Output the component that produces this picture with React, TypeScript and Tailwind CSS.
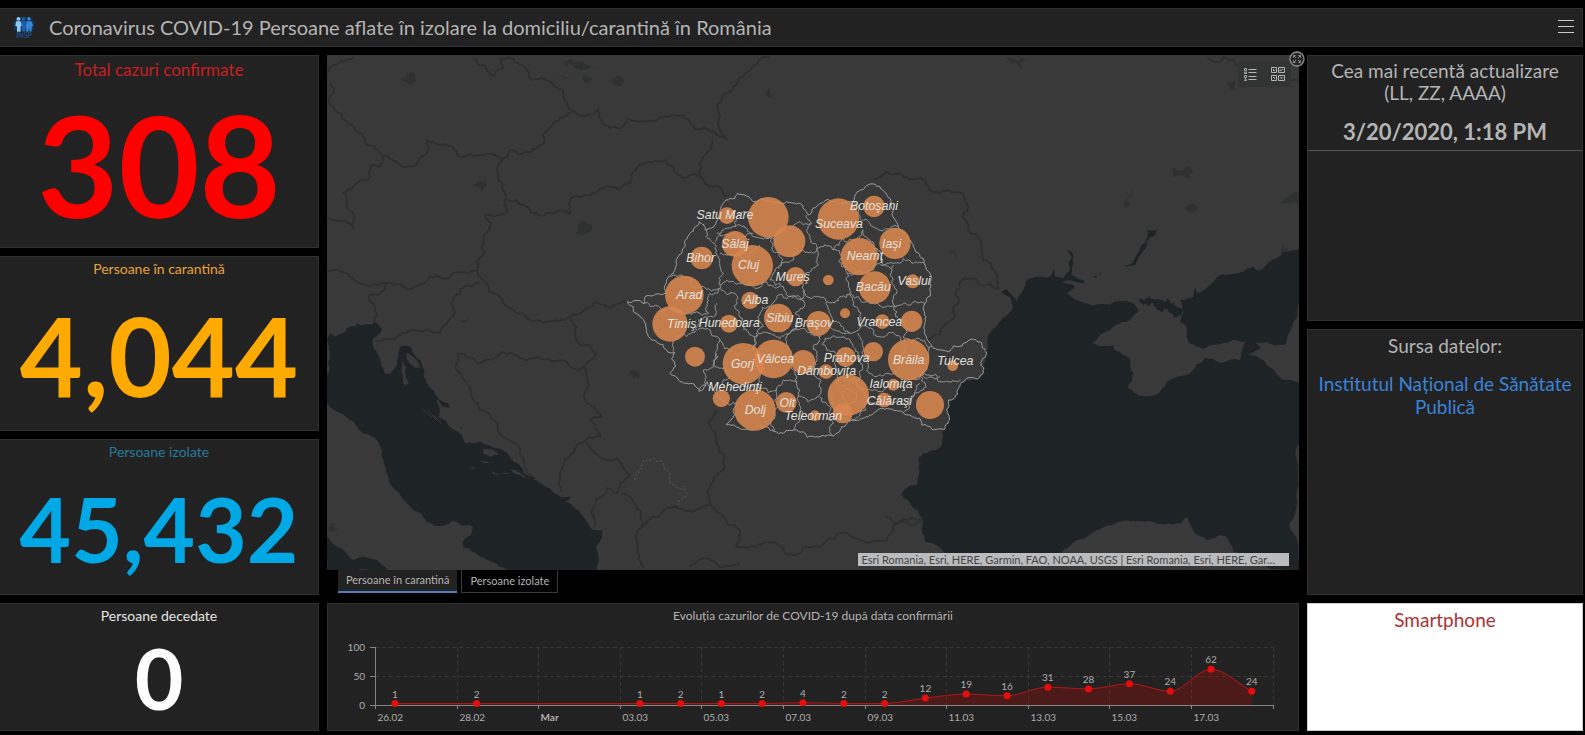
import { useState } from "react";

type Pt = [number, number];

/* ---------- geometry helpers ---------- */

const parse = (s: string): Pt[] =>
  s.trim().split(/\s+/).map((p) => p.split(",").map(Number) as Pt);

// Roughens a coarse polyline with seeded midpoint displacement.
function rough(s: string, amp: number, min: number, close = false): string {
  const pts = parse(s);
  let seed = pts[0][0] * 31 + pts[0][1] * 17 + pts.length;
  const rnd = () => {
    seed = (seed * 9301 + 49297) % 233280;
    return seed / 233280 - 0.5;
  };
  const out: Pt[] = [pts[0]];
  const split = (a: Pt, b: Pt) => {
    const dx = b[0] - a[0];
    const dy = b[1] - a[1];
    if (Math.hypot(dx, dy) < min) {
      out.push(b);
      return;
    }
    const k = rnd() * amp;
    const m: Pt = [(a[0] + b[0]) / 2 - dy * k, (a[1] + b[1]) / 2 + dx * k];
    split(a, m);
    split(m, b);
  };
  for (let i = 1; i < pts.length; i++) split(pts[i - 1], pts[i]);
  if (close) split(pts[pts.length - 1], pts[0]);
  return "M" + out.map((p) => p[0].toFixed(1) + " " + p[1].toFixed(1)).join("L") + (close ? "Z" : "");
}

/* ---------- base map ---------- */

const ADRIATIC =
  "21,118 30,100 45,110 80,85 110,80 108,68 130,75 160,72 165,65 185,90 180,100 160,115 165,150 180,180 192,220 210,222 225,205 235,160 245,137 275,145 300,180 312,210 320,250 345,285 360,325 355,350 395,385 425,405 435,430 480,425 530,445 570,470 600,495 612,520 640,530 690,565 720,590 760,620 790,650 820,690 848,690 845,715 832,735 835,770 832,812 570,812 500,780 430,742 428,725 455,700 458,680 450,675 345,677 320,665 270,620 225,570 200,520 185,460 165,415 130,400 60,340 21,310";
const TYRRHENIAN = "21,710 50,740 75,755 100,780 130,770 170,780 205,812 21,812";
const CHANNEL = "312,250 345,278 370,305 392,322 370,320 330,295";
const ISLANDS = [
  "262,158 290,180 300,205 275,195 265,185",
  "248,180 258,200 268,250 255,258 245,215",
  "490,450 515,448 537,462 510,470 490,462",
  "515,515 572,515 560,523 520,523",
  "570,508 600,518 650,541 610,532",
  "478,483 525,487 500,490",
  "448,503 465,499 462,507",
];

const BLACK_SEA =
  "262,900 275,840 305,810 340,772 335,755 305,725 320,718 340,740 350,755 370,720 380,690 420,680 450,680 462,655 465,680 490,685 510,662 506,640 515,622 503,598 520,615 520,640 515,675 550,690 555,700 480,695 520,705 525,715 500,730 530,750 570,765 630,765 660,752 700,760 715,785 690,810 640,830 600,855 578,880 600,890 640,885 645,900 670,915 690,925 700,970 683,1012 705,1030 730,1038 765,1035 800,995 870,970 915,925 940,928 960,938 1020,930 1030,890 1035,875 1000,870 940,885 910,897 890,890 868,880 862,835 840,815 850,790 845,760 840,750 880,740 885,712 895,730 920,715 960,675 1000,672 1060,650 1075,662 1130,625 1150,605 1200,597 1200,730 1192,780 1175,830 1160,870 1155,885 1125,888 1100,875 1065,880 1085,895 1045,915 1090,930 1120,960 1150,990 1200,998 1200,1564 1150,1560 1040,1512 1000,1505 980,1460 960,1455 920,1470 885,1450 870,1420 860,1400 845,1420 780,1422 670,1412 580,1445 500,1495 480,1508 300,1540 130,1505 75,1475 65,1440 70,1410 30,1360 5,1335 25,1310 50,1305 55,1225 70,1210 120,1195 130,1160 132,1080 150,1010 185,990 245,980 255,900";
const RESERVOIR =
  "675,650 698,638 715,605 738,578 742,540 770,538 766,555 750,560 740,588 715,622 705,645";
const SIVASH = "715,745 735,752 750,738 780,752 800,748 832,770 845,805 820,802 805,785 780,782 760,770";

const NORTH_WEST = [
  "21,72 40,45 60,35 100,22",
  "30,100 45,115 28,145 45,180 80,215 125,250 140,285 180,305 190,325 180,350 150,350 150,380 110,400 70,430 80,465 100,490 100,535 75,510 21,503",
  "190,320 240,345 290,345 325,305 322,270 400,295 470,318 500,312 550,325",
  "550,325 535,385 560,440 560,490 495,495 515,520 490,570 495,610 470,635 470,660 400,670 330,680 280,715 200,700 100,685 21,662",
  "460,22 520,80 550,50 540,25 600,45 640,90 730,120 740,160 765,185 720,205 685,235 670,280 620,305 570,300 550,325",
  "765,185 790,200 835,175 870,235 900,235 920,205 980,215 1060,195 1110,215 1130,240 1220,270 1205,250 1195,185 1240,110 1300,50 1350,22",
  "1175,270 1160,310 1140,340 1140,380 1090,385 1060,350 950,355 930,400 850,415 760,440 750,490 650,490 590,450 560,450",
  "1140,380 1180,410 1220,440",
  "470,660 490,690 540,740 600,790 680,815 750,800 830,755 920,757",
  "480,695 400,745 405,790 360,850 280,840 200,865 165,870",
  "200,700 145,740 165,770 160,820",
];
const SOUTH_WEST = [
  "750,50 770,80 775,130 830,160 790,200 800,230 795,300 845,350 810,360 840,410 780,430 735,480 720,530 725,575",
  "410,210 415,160 475,190 545,155 600,175 720,180 770,210 800,205",
  "410,210 450,260 480,330 540,400 600,460 640,530",
  "800,430 860,480 930,525 900,550 890,580 860,565 815,640 825,680",
  "905,580 950,620 965,680 950,740 970,805",
  "965,680 1000,650 1060,620 1170,610 1200,640 1260,690 1250,740 1330,730 1480,740 1560,700 1700,720 1760,660 1840,665",
  "1170,610 1175,550 1215,500 1190,430 1165,370 1190,330",
  "1110,800 1150,775 1260,790",
];
const EAST = [
  "-80,385 -40,365 0,370 60,385 120,430 200,460 205,540 240,570 250,630 285,660 290,710 300,715",
  "300,715 240,705 180,695 175,760 130,830 100,860 80,870",
  "920,22 940,35 970,22 1020,60 1100,80 1197,95",
  "-40,1400 0,1415 30,1425 65,1418",
];
const CITIES_NW = [
  "245,85 262,68 285,80 262,100",
  "462,410 480,394 500,405 485,425",
  "765,548 790,512 812,540 790,555",
  "730,30 760,45 790,35 835,50 800,60 740,50",
  "870,90 890,75 915,88 880,108",
  "785,75 820,90 800,98",
  "708,90 730,70 750,90",
  "1335,130 1350,115 1360,135",
  "420,812 445,798 440,820",
];
const CITIES_EAST = [
  "315,22 385,28 360,60 330,40",
  "805,352 860,350 885,365 865,388",
  "665,468 685,440 698,418 690,468",
  "858,470 880,460 892,478 870,488",
  "1145,460 1165,438 1197,430 1197,460",
  "978,100 1005,85 1010,122",
  "150,605 165,605 172,628",
  "1140,605 1150,582 1165,600",
];

/* ---------- counties ---------- */

const OUTLINE =
  "22,395 48,392 75,400 78,378 110,372 138,368 150,318 160,310 168,275 190,235 210,190 238,155 256,180 262,178 285,165 300,130 310,100 330,85 345,85 352,70 375,75 395,90 410,95 450,95 500,95 540,100 565,135 600,100 650,95 700,95 712,65 750,42 780,50 810,85 815,115 835,170 860,195 880,230 910,265 915,285 930,310 932,350 915,400 918,440 915,480 930,520 960,540 985,545 1000,528 1045,512 1085,518 1098,545 1088,612 1040,625 1022,640 985,690 980,720 972,780 940,780 905,765 900,745 870,735 850,728 830,722 760,730 700,750 665,770 640,798 600,800 530,780 490,790 440,770 400,780 360,775 320,765 345,735 350,700 310,695 280,660 262,635 238,665 222,642 180,635 150,610 168,588 155,565 165,548 140,540 110,515 85,500 78,470 60,440 40,425";
const COUNTIES = [
  "262,178 275,215 290,240 300,270 310,310 300,345",
  "150,318 180,315 200,325 240,350 280,360 300,355 300,345",
  "75,400 100,410 150,415 190,430 230,425 265,430 270,370 300,355",
  "285,215 320,175 345,170 365,130 395,130",
  "290,190 345,190 375,200 400,190",
  "300,250 340,255 380,270 420,225",
  "345,170 400,200 440,205 480,190 500,170 540,155 575,160 560,135",
  "440,205 460,245 480,260 465,300",
  "480,290 520,270 545,240 590,240 570,200 570,160",
  "590,240 605,230 640,240 665,205 700,210 730,180",
  "700,95 715,125 750,160 770,175 815,170 835,170",
  "730,180 750,210 760,235 785,265 790,285 820,280 850,265 880,280 915,285",
  "680,310 710,305 760,300 815,295 820,285",
  "815,295 815,340 820,380 830,410",
  "715,380 760,400 800,410 850,400 915,400",
  "820,410 850,460 850,500 860,520",
  "590,240 595,285 555,310 548,350 560,380 620,395 660,380 690,370 680,330 665,290 640,240",
  "690,370 715,380",
  "620,395 630,430 640,455 690,490 715,480 720,440 700,405 690,370",
  "465,300 450,330 490,350 500,375 550,385 555,360",
  "300,345 345,340 400,350 440,335 480,350",
  "300,355 345,370 350,420 370,455 390,495 410,500",
  "410,500 430,470 420,430 470,380 530,378 555,400",
  "555,400 525,430 525,480 510,490",
  "410,500 450,490 510,490 560,485 600,500 640,480 690,490",
  "290,400 265,440 235,450 230,480 165,500 160,545",
  "235,480 270,480 300,510 295,560 250,600 255,625 238,660",
  "300,510 340,545 400,540 405,500",
  "290,550 285,590 330,620 310,650",
  "405,500 415,560 420,620 410,660",
  "510,490 510,540 520,600 530,640",
  "350,650 420,655 470,660 490,630 530,640",
  "470,660 465,720 460,785",
  "530,640 535,680 540,720 525,780",
  "600,500 590,550 580,600 595,680 535,680",
  "615,505 620,540 650,600 650,640 700,630 720,560 690,510 615,505",
  "715,490 730,560 740,600 800,610 850,570 840,500 770,500 720,470",
  "700,620 740,660 830,650 900,620 960,620",
  "740,680 800,700 880,680 900,640",
  "850,500 905,510 930,530 920,590 900,620",
  "910,620 960,635 1022,630",
  "905,620 910,660 870,690 850,728",
  "630,660 640,700 650,740 690,750 720,730 740,700 720,660 650,640",
  "665,670 685,655 710,670 705,695 680,700 665,670",
  "600,680 620,700 640,760 640,798",
];

const BUBBLES: [number, number, number][] = [
  [445, 142, 61], [508, 214, 48], [655, 147, 62], [762, 109, 32], [321, 137, 25],
  [345, 222, 39], [245, 264, 34], [397, 287, 62], [527, 320, 29], [718, 260, 56],
  [825, 220, 47], [878, 334, 21], [764, 352, 48], [193, 375, 58], [390, 391, 26],
  [625, 330, 16], [675, 430, 15], [150, 462, 53], [327, 461, 27], [475, 444, 43],
  [596, 460, 37], [787, 455, 22], [875, 454, 32], [225, 560, 30], [370, 581, 62],
  [461, 567, 58], [550, 576, 36], [618, 605, 22], [677, 561, 30], [760, 545, 29],
  [866, 569, 62], [998, 587, 16], [304, 685, 26], [405, 720, 62], [499, 697, 31],
  [585, 737, 16], [685, 675, 62], [668, 730, 30], [820, 644, 18], [792, 690, 22],
  [930, 705, 42],
];

const NAMES: [string, number, number][] = [
  ["Satu Mare", 315, 148], ["Botoşani", 762, 120], ["Suceava", 657, 173], ["Sălaj", 345, 235],
  ["Iaşi", 815, 233], ["Neamţ", 735, 271], ["Bihor", 242, 276], ["Cluj", 386, 298],
  ["Mureş", 518, 332], ["Vaslui", 882, 346], ["Bacău", 760, 363], ["Arad", 208, 386],
  ["Alba", 408, 403], ["Sibiu", 480, 455], ["Timiş", 185, 473], ["Hunedoara", 328, 472],
  ["Braşov", 582, 472], ["Vrancea", 778, 467], ["Vâlcea", 466, 578], ["Gorj", 368, 593],
  ["Prahova", 680, 577], ["Dâmboviţa", 620, 616], ["Brăila", 866, 581], ["Tulcea", 1006, 586],
  ["Mehedinţi", 345, 662], ["Ialomiţa", 813, 654], ["Călăraşi", 808, 704], ["Dolj", 406, 731],
  ["Olt", 502, 710], ["Teleorman", 580, 750],
];

function MapCanvas({ showBubbles }: { showBubbles: boolean }) {
  const third = "scale(0.33333)";
  const line = { fill: "none", stroke: "#2d2e2e", strokeWidth: 5, strokeLinejoin: "round" as const };
  return (
    <svg
      viewBox="327 55 972 515"
      preserveAspectRatio="xMidYMid slice"
      className="absolute inset-0 h-full w-full"
      role="img"
      aria-label="Harta județelor"
    >
      <rect x="-500" y="-500" width="3000" height="2000" fill="#383938" />
      <g transform={"translate(320 50) " + third}>
        {NORTH_WEST.map((s) => <path key={s} d={rough(s, 0.4, 10)} {...line} />)}
        {CITIES_NW.map((s) => <path key={s} d={rough(s, 0.8, 6, true)} fill="#2f3030" />)}
      </g>
      <g transform={"translate(320 300) " + third}>
        {SOUTH_WEST.map((s) => <path key={s} d={rough(s, 0.4, 10)} {...line} />)}
        <path
          d={rough("945,540 970,480 1000,475 1050,545 1095,560 1075,615", 0.5, 8)}
          fill="none" stroke="#4c4e4d" strokeWidth="4" strokeDasharray="8 5"
        />
        <path d={rough("925,222 945,212 960,232 940,236", 0.8, 6, true)} fill="#2f3030" />
        <path d={rough("25,680 40,668 52,685 38,692", 0.8, 6, true)} fill="#2f3030" />
        <path d={rough(ADRIATIC, 0.25, 9, true)} fill="#1e2325" />
        <path d={rough(TYRRHENIAN, 0.2, 9, true)} fill="#1e2325" />
        <path d={rough(CHANNEL, 0.4, 6, true)} fill="#1e2325" />
        <path d="M728 592L752 590L748 600L735 602ZM420 380L428 383L424 388Z" fill="#1e2325" />
        {ISLANDS.map((s) => <path key={s} d={rough(s, 0.3, 6, true)} fill="#383938" />)}
        <path d="M310 330L335 352M322 328L350 362M340 345L365 372" stroke="#383938" strokeWidth="3" />
      </g>
      <g transform={"translate(900 50) " + third}>
        {EAST.map((s) => <path key={s} d={rough(s, 0.5, 9)} {...line} />)}
        {CITIES_EAST.map((s) => <path key={s} d={rough(s, 0.6, 6, true)} fill="#2f3030" />)}
        <path d={rough(BLACK_SEA, 0.22, 10, true)} fill="#1e2325" />
        <path d={rough(RESERVOIR, 0.3, 8, true)} fill="#1e2325" />
        <path d={rough(SIVASH, 0.9, 7, true)} fill="#1e2325" />
        <path d="M580 680L592 676L588 684ZM596 670L608 668L600 674Z" fill="#1e2325" />
      </g>
      <g transform={"translate(620 170) " + third}>
        <path d={rough(OUTLINE, 0.4, 8, true)} fill="#383938" stroke="#9fa0a0" strokeWidth="3" />
        <g fill="none" stroke="#949595" strokeWidth="3">
          {COUNTIES.map((s) => <path key={s} d={rough(s, 0.6, 7)} />)}
        </g>
        {showBubbles && (
          <g fill="#d9864e" fillOpacity="0.88">
            {BUBBLES.map(([x, y, r]) => <circle key={x + "-" + y} cx={x} cy={y} r={r} />)}
          </g>
        )}
        <g fontSize="37" textAnchor="middle" fill="#e3e1df" className="font-['Liberation_Sans',sans-serif] italic">
          {NAMES.map(([n, x, y]) => <text key={n} x={x} y={y}>{n}</text>)}
        </g>
      </g>
    </svg>
  );
}

/* ---------- chart ---------- */

const CASES: [number, number][] = [
  [0, 1], [2, 2], [6, 1], [7, 2], [8, 1], [9, 2], [10, 4], [11, 2], [12, 2], [13, 12],
  [14, 19], [15, 16], [16, 31], [17, 28], [18, 37], [19, 24], [20, 62], [21, 24],
];
const TICKS = ["26.02", "28.02", "Mar", "03.03", "05.03", "07.03", "09.03", "11.03", "13.03", "15.03", "17.03"];
const BASE = 77;
const px = (day: number) => 67 + day * 40.8;
const py = (v: number) => BASE - Math.max(v * 0.575, 1.5);

// Monotone cubic curve through the points.
function curve(p: Pt[]): string {
  const s = p.slice(1).map((q, i) => (q[1] - p[i][1]) / (q[0] - p[i][0]));
  const m = p.map((_, i) => {
    if (i === 0) return s[0];
    if (i === p.length - 1) return s[i - 1];
    return s[i - 1] * s[i] <= 0 ? 0 : (2 * s[i - 1] * s[i]) / (s[i - 1] + s[i]);
  });
  let d = "M" + p[0].join(" ");
  for (let i = 1; i < p.length; i++) {
    const h = (p[i][0] - p[i - 1][0]) / 3;
    d += `C${p[i - 1][0] + h} ${p[i - 1][1] + m[i - 1] * h} ${p[i][0] - h} ${p[i][1] - m[i] * h} ${p[i][0]} ${p[i][1]}`;
  }
  return d;
}

function CasesChart() {
  const pts = CASES.map(([d, v]) => [px(d), py(v)] as Pt);
  const line = curve(pts);
  const last = pts[pts.length - 1][0];
  const grid = Array.from({ length: 12 }, (_, i) => Math.round(47 + i * 81.6) + 0.5);
  return (
    <svg viewBox="0 0 970 102" className="h-0 w-full flex-1" role="img" aria-label="Cazuri pe zile">
      <g stroke="#363636" strokeDasharray="4 3">
        {grid.slice(1).map((x) => <path key={x} d={`M${x} 19V${BASE}`} />)}
        <path d={`M47 19.5H${grid[11]}M47 48.5H${grid[11]}`} />
      </g>
      <path d={`${line}L${last} ${BASE}L${pts[0][0]} ${BASE}Z`} fill="#e60000" fillOpacity="0.22" />
      <path d={`M47.5 19V81M42 19.5H47M42 48.5H47M42 ${BASE + 0.5}H${grid[11]}`} fill="none" stroke="#858585" />
      {grid.slice(1).map((x) => <path key={x} d={`M${x} ${BASE}V81`} stroke="#858585" />)}
      <path d={line} fill="none" stroke="#b81414" />
      <g fill="#adadad" fontSize="10">
        <g textAnchor="end">
          <text x="37" y="23">100</text>
          <text x="37" y="52">50</text>
          <text x="37" y="81">0</text>
        </g>
        {TICKS.map((t, i) => (
          <text key={t} x={grid[i] + 2} y="93" fontWeight={t === "Mar" ? 700 : 400}>{t}</text>
        ))}
        <g textAnchor="middle">
          {pts.map(([x, y], i) => <text key={x} x={x} y={y - 6}>{CASES[i][1]}</text>)}
        </g>
      </g>
      {pts.map(([x, y]) => <circle key={x} cx={x} cy={y} r="3.5" fill="#e60d0d" />)}
    </svg>
  );
}

/* ---------- icons ---------- */

function Logo() {
  return (
    <svg viewBox="0 0 22 22" className="h-[22px] w-[22px]" role="img" aria-label="INSP">
      <path d="M.5 10Q0 4 5 2Q11 -1 17 2Q22 4 21 10L20 15H2Z" fill="#12406f" opacity=".7" />
      <g fill="#8cc8f4">
        <circle cx="5.5" cy="2.8" r="1.9" />
        <path d="M3 5.2H8L8.8 10L7.6 10.5V15.8H4V10.5L2.4 10Z" />
      </g>
      <g fill="#1d62b0">
        <circle cx="10.5" cy="3" r="1.7" />
        <path d="M8.8 5.3H12.4L12.8 10L12 15.8H9.4L8.6 10Z" />
      </g>
      <g fill="#3189dc">
        <circle cx="16" cy="2.8" r="1.8" />
        <path d="M13.6 5.2H18.4L20.2 10L18.8 10.6L18.4 15.8H16.7L16 11.5L15.3 15.8H13.4L12.9 10Z" />
      </g>
      <text x="11" y="21.8" textAnchor="middle" fontSize="7" fontWeight="700" fill="#1a4f8f">INSP</text>
    </svg>
  );
}

function LegendIcon() {
  return (
    <svg viewBox="0 0 13 13" className="h-[13px] w-[13px]" fill="none" stroke="#b4b4b4" aria-hidden="true">
      <path d="M4.5 1.5H12.5M4.5 4.5H12.5M4.5 8.5H12.5M4.5 11.5H12.5" />
      <path d="M.5 .5H2.5V2.5H.5ZM.5 4H2.5V5.5H.5ZM.5 7.5H2.5V9.5H.5ZM.5 12.5L1.5 10.5L2.5 12.5Z" strokeWidth=".9" />
    </svg>
  );
}

function BasemapIcon() {
  return (
    <svg viewBox="0 0 14 14" className="h-3.5 w-3.5" fill="none" stroke="#b4b4b4" aria-hidden="true">
      <path d="M.5 .5H5.5V5.5H.5ZM7.5 .5H13.5V5.5H7.5ZM.5 8.5H5.5V13.5H.5ZM7.5 8.5H13.5V13.5H7.5Z" />
      <path d="M2 2L4 4M2 4L3 3M9 4L12 2M9 2.5V4.2M2 10.5H3.5V12M9.3 10.2L11.5 12M11.5 10L10 11.5" strokeWidth=".9" />
    </svg>
  );
}

function ExpandIcon() {
  return (
    <svg viewBox="0 0 16 16" className="h-4 w-4" fill="none" stroke="#8c8c8c" aria-hidden="true">
      <circle cx="8" cy="8" r="7" fill="#262626" strokeWidth="1.3" />
      <path d="M4.5 6.5V4.5H6.5M9.5 4.5H11.5V6.5M11.5 9.5V11.5H9.5M6.5 11.5H4.5V9.5M4.8 4.8L7 7M11.2 4.8L9 7M11.2 11.2L9 9M4.8 11.2L7 9" />
    </svg>
  );
}

/* ---------- page ---------- */

const PANEL = "border border-[#303030] bg-[#222]";

const STATS = [
  { label: "Total cazuri confirmate", value: "308", labelClass: "pt-1 text-[17px] text-[#c81e1e]", valueClass: "text-[140px] text-[#ff0000]" },
  { label: "Persoane în carantină", value: "4,044", labelClass: "pt-0.5 text-[14px] text-[#e8a33a]", valueClass: "text-[109px] text-[#ffaa00]" },
  { label: "Persoane izolate", value: "45,432", labelClass: "pt-0.5 text-[14px] text-[#257a9c]", valueClass: "text-[89px] text-[#00a9e6]" },
  { label: "Persoane decedate", value: "0", labelClass: "pt-0.5 text-[14px] text-[#e4e4e4]", valueClass: "text-[84px] text-white" },
];

const TABS = ["Persoane în carantină", "Persoane izolate"];

export default function App() {
  const [tab, setTab] = useState(0);
  return (
    <div className="flex min-h-screen flex-col gap-2 bg-black pt-2 pb-1 font-[Lato,sans-serif] text-[#b4b4b4]">
      <header className={"mr-0.5 flex h-[39px] items-center gap-3.5 border-l-0 pr-2 pb-0.5 pl-[13px] " + PANEL}>
        <Logo />
        <h1 className="flex-1 truncate text-[20px] leading-6">
          Coronavirus COVID-19 Persoane aflate în izolare la domiciliu/carantină în România
        </h1>
        <button type="button" aria-label="Meniu" className="flex w-4 flex-col gap-[5px]">
          <span className="h-px bg-[#c8c8c8]" />
          <span className="h-px bg-[#c8c8c8]" />
          <span className="h-px bg-[#c8c8c8]" />
        </button>
      </header>

      <main className="mr-0.5 grid flex-1 grid-cols-[319fr_972fr_276fr] gap-2">
        <div className="grid grid-rows-[193fr_175fr_156fr_128fr] gap-2">
          {STATS.map((s) => (
            <section key={s.label} className={"flex min-h-0 flex-col items-center border-l-0 " + PANEL}>
              <h2 className={"leading-5 " + s.labelClass}>{s.label}</h2>
              <p className={"flex min-h-0 flex-1 items-center leading-none font-bold " + s.valueClass}>{s.value}</p>
            </section>
          ))}
        </div>

        <div className="grid grid-rows-[540fr_128fr] gap-2">
          <section className="flex min-h-0 flex-col">
            <div className="relative flex-1">
              <div className="absolute inset-0 overflow-hidden">
                <MapCanvas showBubbles={tab === 0} />
              </div>
              <div className="absolute top-1.5 right-2 flex h-[26px] items-center gap-3.5 bg-[#323333] px-1.5">
                <button type="button" aria-label="Legendă"><LegendIcon /></button>
                <button type="button" aria-label="Hartă de bază"><BasemapIcon /></button>
              </div>
              <button type="button" aria-label="Extinde" className="absolute -top-1 -right-1.5">
                <ExpandIcon />
              </button>
              <p className="absolute right-2.5 bottom-1 bg-[#b9bbbc] pr-3.5 pl-1 text-[11px] leading-[13px] whitespace-nowrap text-[#444]">
                Esri Romania, Esri, HERE, Garmin, FAO, NOAA, USGS | Esri Romania, Esri, HERE, Gar…
              </p>
            </div>
            <div className="mb-0.5 flex gap-1 pl-[11px]" role="tablist">
              {TABS.map((t, i) => (
                <button
                  key={t}
                  type="button"
                  role="tab"
                  aria-selected={tab === i}
                  onClick={() => setTab(i)}
                  className={
                    "h-[23px] px-2 text-[11px] " +
                    (tab === i
                      ? "border-b-2 border-[#4a7fc0] bg-[#222]"
                      : "border border-t-0 border-[#3a3a3a] bg-black")
                  }
                >
                  {t}
                </button>
              ))}
            </div>
          </section>
          <section className={"flex min-h-0 flex-col " + PANEL}>
            <h2 className="pt-0.5 pb-0.5 text-center text-[12px] leading-5">
              Evoluția cazurilor de COVID-19 după data confirmării
            </h2>
            <CasesChart />
          </section>
        </div>

        <div className="grid grid-rows-[266fr_266fr_128fr] gap-2">
          <section className={"text-center " + PANEL}>
            <div className="border-b border-[#555] px-2 pt-1 pb-1">
              <h2 className="text-[19px] leading-[22px]">Cea mai recentă actualizare<br />(LL, ZZ, AAAA)</h2>
              <p className="pt-3.5 text-[22px] leading-7 font-bold">3/20/2020, 1:18 PM</p>
            </div>
          </section>
          <section className={"px-2 pt-1 text-center text-[19px] " + PANEL}>
            <h2 className="leading-6">Sursa datelor:</h2>
            <a href="#insp" className="mt-3.5 block leading-[23px] text-[#3b82d6]">
              Institutul Național de Sănătate Publică
            </a>
          </section>
          <section className="border border-[#ccc] bg-white pt-1 text-center">
            <h2 className="text-[19px] leading-6 text-[#b03030]">Smartphone</h2>
          </section>
        </div>
      </main>
    </div>
  );
}
